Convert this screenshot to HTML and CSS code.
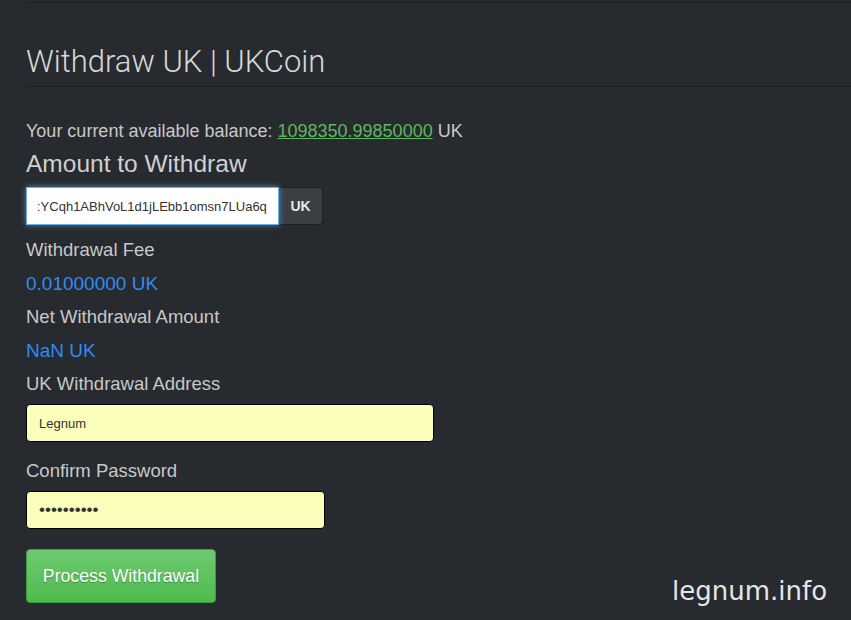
FILE: index.html
```html
<!DOCTYPE html>
<html lang="en">

<head>
    <meta charset="UTF-8">
    <title>Withdraw UK</title>
    <link rel="stylesheet" href="styles.css">
</head>

<body>
    <div class="page">
        <div class="page-header">
            <h1>Withdraw UK | UKCoin</h1>
        </div>

        <p class="balance">Your current available balance: <a href="#">1098350.99850000</a> UK</p>

        <h3>Amount to Withdraw</h3>
        <div class="input-group">
            <input type="text" class="amount" value=":YCqh1ABhVoL1d1jLEbb1omsn7LUa6q">
            <span class="addon">UK</span>
        </div>

        <label class="fee-label">Withdrawal Fee</label>
        <div class="value">0.01000000 UK</div>

        <label>Net Withdrawal Amount</label>
        <div class="value">NaN UK</div>

        <label>UK Withdrawal Address</label>
        <input type="text" class="field address" value="Legnum">

        <label class="pw-label">Confirm Password</label>
        <input type="password" class="field password" value="0123456789">

        <button class="btn-process">Process Withdrawal</button>
    </div>

    <div class="watermark">legnum.info</div>
</body>

</html>
```

FILE: styles.css
```css
* {
    margin: 0;
    padding: 0;
    box-sizing: border-box;
}

body {
    font-family: 'Liberation Sans', Arial, sans-serif;
    background-color: #272a2f;
    color: #c8c8c8;
    font-size: 18.5px;
    height: 620px;
    overflow: hidden;
}

.page {
    margin-left: 26px;
    border-top: 1px solid #1c1e22;
    margin-top: 2px;
    display: flex;
    flex-direction: column;
    align-items: flex-start;
}

.page-header {
    align-self: stretch;
    border-bottom: 1px solid #1c1e22;
    padding-top: 41px;
    padding-bottom: 6px;
}

h1 {
    font-family: 'Roboto', sans-serif;
    font-weight: 300;
    font-size: 31px;
    color: #d8d8d8;
    line-height: 36px;
}

.balance {
    font-size: 18px;
    margin-top: 33px;
    line-height: 22px;
}

.balance a {
    color: #5cb85c;
    text-decoration: underline;
}

h3 {
    font-weight: normal;
    font-size: 24.5px;
    color: #d0d0d0;
    margin-top: 8px;
    line-height: 28px;
}

.input-group {
    display: flex;
    margin-top: 9px;
}

.amount {
    width: 253px;
    height: 38px;
    border: 1px solid #66afe9;
    box-shadow: 0 0 6px rgba(102, 175, 233, 0.7);
    padding: 0 10px;
    font-family: 'Liberation Sans', Arial, sans-serif;
    font-size: 13px;
    color: #333;
    outline: none;
    position: relative;
    z-index: 1;
}

.addon {
    width: 44px;
    height: 38px;
    background-color: #3a3f44;
    border: 1px solid #1c1e22;
    border-left: none;
    border-radius: 0 4px 4px 0;
    color: #e8e8e8;
    font-size: 14px;
    font-weight: bold;
    display: flex;
    align-items: center;
    justify-content: center;
}

label {
    display: block;
    margin-top: 10px;
    line-height: 22px;
}

.fee-label {
    margin-top: 14px;
}

.value {
    color: #2f8cf2;
    font-size: 19px;
    margin-top: 11px;
    line-height: 24px;
}

.field {
    height: 38px;
    background-color: #fbffbb;
    border: 1px solid #000;
    border-radius: 4px;
    padding: 0 12px;
    font-family: 'Liberation Sans', Arial, sans-serif;
    font-size: 13px;
    color: #333;
    margin-top: 9px;
}

.address {
    width: 408px;
}

.pw-label {
    margin-top: 18px;
}

.password {
    width: 299px;
    font-size: 17px;
}

.btn-process {
    margin-top: 20px;
    width: 190px;
    height: 54px;
    border: 1px solid #3e9b3e;
    border-radius: 4px;
    background: linear-gradient(#6ec96e, #4fbb4f);
    color: #fff;
    font-family: 'Liberation Sans', Arial, sans-serif;
    font-size: 17.7px;
    text-shadow: 0 1px 1px rgba(0, 0, 0, 0.3);
}

.watermark {
    position: absolute;
    left: 672px;
    top: 576px;
    font-family: 'DejaVu Sans', sans-serif;
    font-size: 26px;
    color: #e6e6e6;
}
```
